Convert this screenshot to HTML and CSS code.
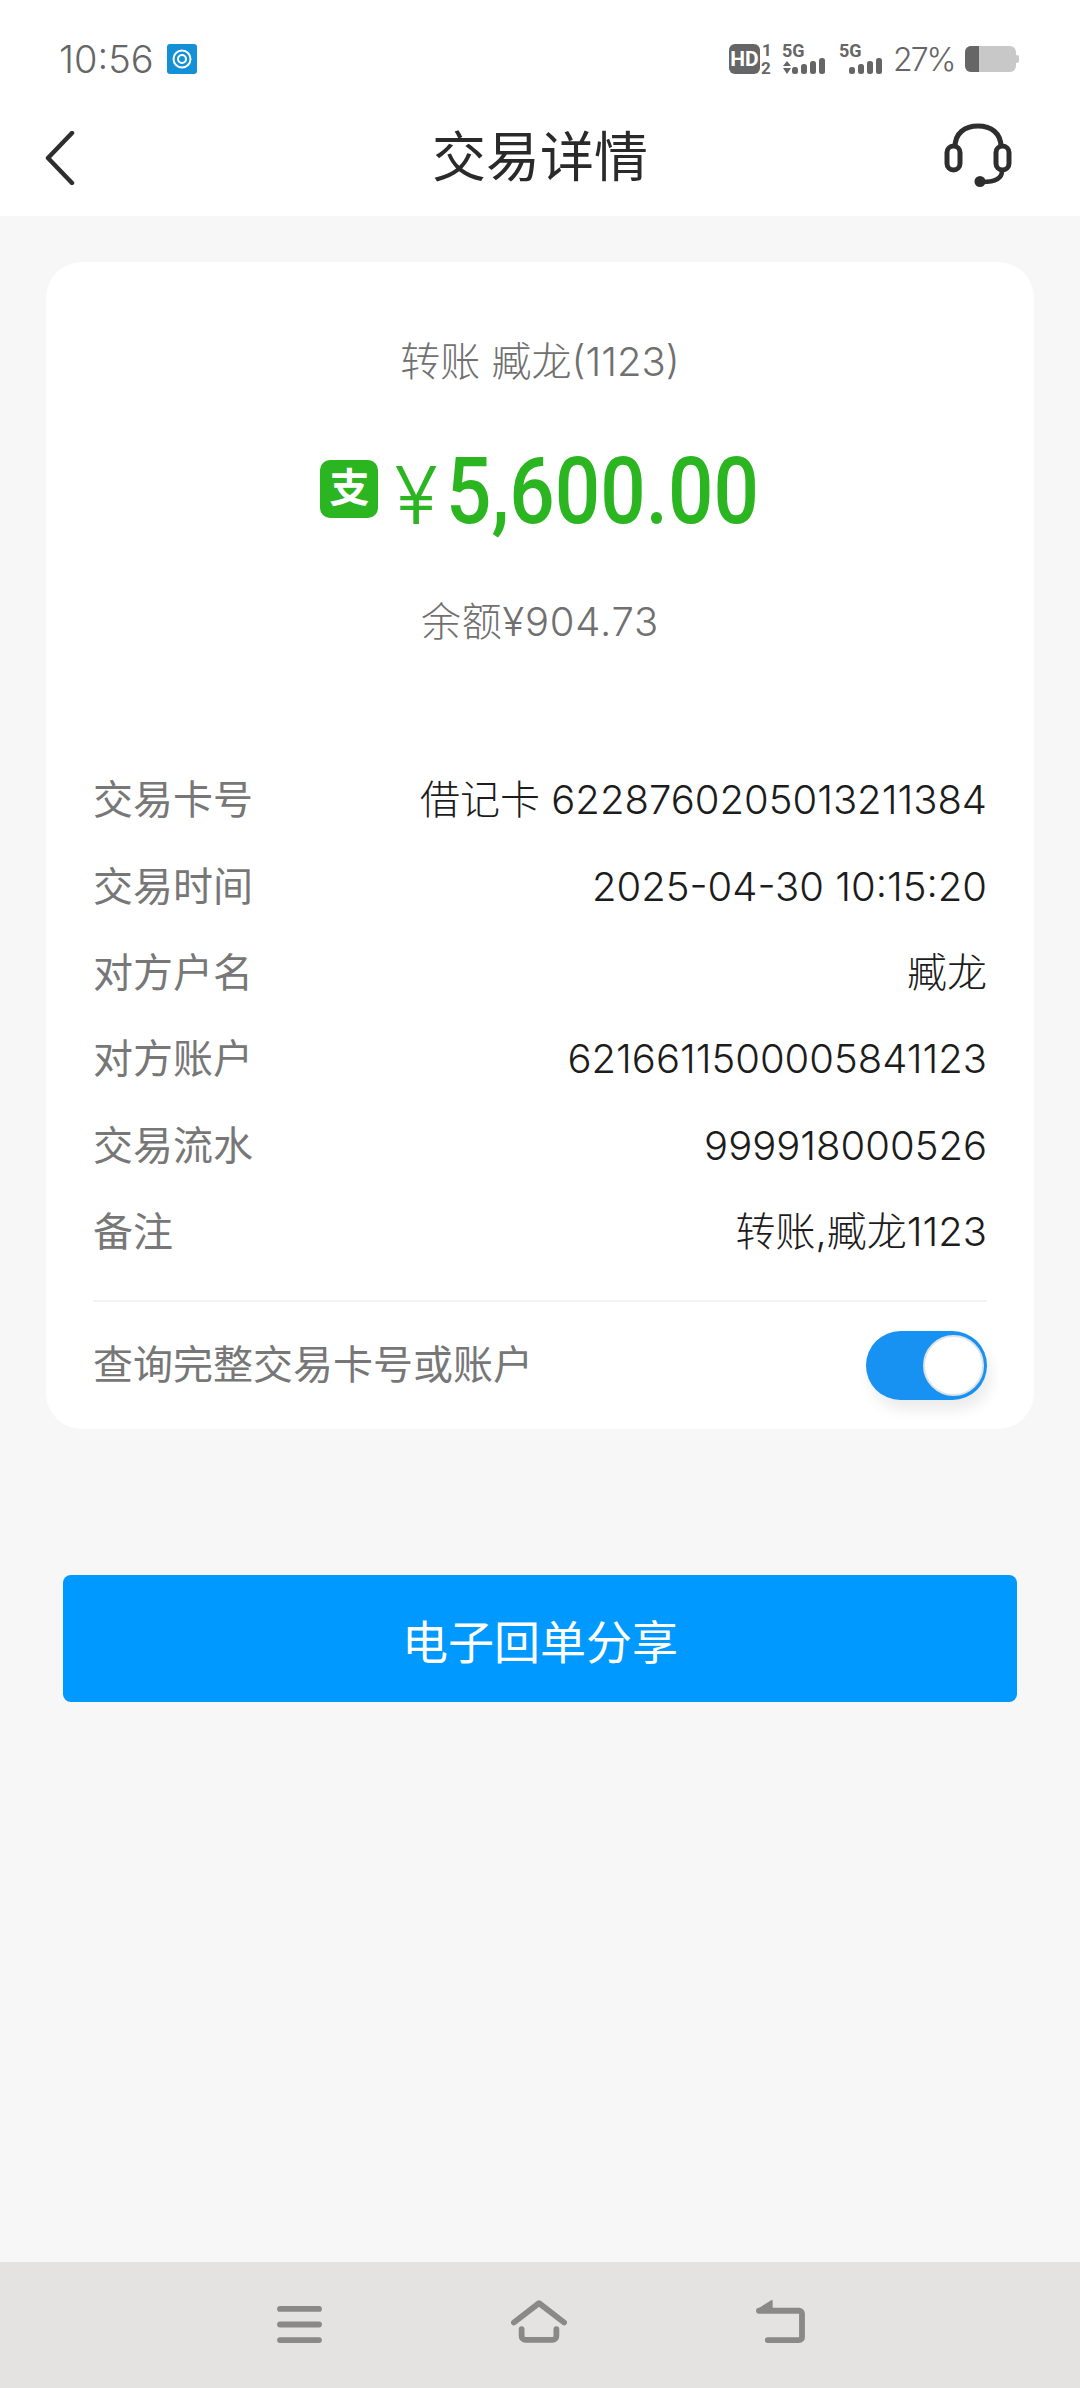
FILE: index.html
```html
<!DOCTYPE html>
<html lang="zh-CN">
    <head>
        <meta charset="utf-8">
        <title>交易详情</title>
        <meta name="viewport" content="width=device-width,initial-scale=1">
        <link rel="stylesheet" href="styles.css">
    </head>
    <body>
        <div class="status-bar">
            <div class="status-left">
                <span class="clock">10:56</span>
                <svg class="app-chip" viewBox="0 0 30 30">
                    <rect width="30" height="30" rx="3" fill="#1491d6"/>
                    <circle cx="15" cy="15" r="8.5" fill="none" stroke="#fff" stroke-width="2"/>
                    <circle cx="15" cy="15" r="4" fill="none" stroke="#fff" stroke-width="2"/>
                </svg>
            </div>
            <div class="status-right">
                <svg class="sim-icons" viewBox="0 -4 155 40">
                    <rect x="0" y="1" width="31" height="30" rx="6" fill="#666"/>
                    <text x="15.5" y="23" class="hd">HD</text>
                    <text x="33" y="13" class="sim-num">1</text>
                    <text x="32" y="31" class="sim-num">2</text>
                    <text x="53" y="14" class="net">5G</text>
                    <path d="M54 23l4-5 4 5zM54 25h8l-4 6z" fill="#666"/>
                    <rect x="63" y="24" width="6" height="7" rx="2.5" fill="#666"/>
                    <rect x="72" y="21" width="6" height="10" rx="2.5" fill="#666"/>
                    <rect x="81" y="18" width="6" height="13" rx="2.5" fill="#666"/>
                    <rect x="90" y="15" width="6" height="16" rx="2.5" fill="#666"/>
                    <text x="110" y="14" class="net">5G</text>
                    <rect x="120" y="24" width="6" height="7" rx="2.5" fill="#666"/>
                    <rect x="129" y="21" width="6" height="10" rx="2.5" fill="#666"/>
                    <rect x="138" y="18" width="6" height="13" rx="2.5" fill="#666"/>
                    <rect x="147" y="15" width="6" height="16" rx="2.5" fill="#666"/>
                </svg>
                <span class="battery-text">27%</span>
                <svg class="battery" viewBox="0 0 54 26">
                    <rect x="0" y="0" width="51" height="26" rx="6" fill="#c8c8c8"/>
                    <rect x="50" y="9" width="4" height="8" rx="2" fill="#c8c8c8"/>
                    <path d="M6 0h8v26H6a6 6 0 0 1-6-6V6a6 6 0 0 1 6-6z" fill="#666"/>
                </svg>
            </div>
        </div>

        <header class="nav-header">
            <button class="icon-btn">
                <svg class="back-icon" viewBox="0 0 30 54">
                    <path d="M27 2L3 27l24 25" fill="none" stroke="#2e2e2e" stroke-width="4.5" stroke-linecap="round" stroke-linejoin="round"/>
                </svg>
            </button>
            <h1 class="page-title">交易详情</h1>
            <button class="icon-btn service-btn">
                <svg class="service-icon" viewBox="0 0 68 64">
                    <path d="M11 24C11 10 21 3 34 3s23 7 23 21" fill="none" stroke="#2e2e2e" stroke-width="5"/>
                    <rect x="3" y="23" width="13" height="24" rx="6.5" fill="none" stroke="#2e2e2e" stroke-width="5"/>
                    <rect x="52" y="23" width="13" height="24" rx="6.5" fill="none" stroke="#2e2e2e" stroke-width="5"/>
                    <path d="M58 48c0 8-8 11-20 11" fill="none" stroke="#2e2e2e" stroke-width="4.5"/>
                    <circle cx="36" cy="58.5" r="5.5" fill="#2e2e2e"/>
                </svg>
            </button>
        </header>

        <main class="content">
            <section class="detail-card">
                <p class="trade-title">转账 臧龙(1123)</p>
                <div class="amount-line">
                    <span class="pay-badge">支</span>
                    <span class="yen">¥</span>
                    <span class="amount">5,600.00</span>
                </div>
                <p class="balance">余额¥904.73</p>

                <dl class="rows">
                    <div class="row"><dt>交易卡号</dt><dd>借记卡 6228760205013211384</dd></div>
                    <div class="row"><dt>交易时间</dt><dd>2025-04-30 10:15:20</dd></div>
                    <div class="row"><dt>对方户名</dt><dd>臧龙</dd></div>
                    <div class="row"><dt>对方账户</dt><dd>6216611500005841123</dd></div>
                    <div class="row"><dt>交易流水</dt><dd>999918000526</dd></div>
                    <div class="row"><dt>备注</dt><dd>转账,臧龙1123</dd></div>
                </dl>

                <div class="full-number">
                    <span class="full-label">查询完整交易卡号或账户</span>
                    <div class="toggle"><div class="knob"></div></div>
                </div>
            </section>

            <button class="share-btn">电子回单分享</button>
        </main>

        <nav class="sys-nav">
            <svg class="menu-icon" viewBox="0 0 46 38">
                <path d="M3 3h40M3 19h40M3 35h40" fill="none" stroke="#8b8987" stroke-width="6" stroke-linecap="round"/>
            </svg>
            <svg class="home-icon" viewBox="0 0 58 44">
                <path d="M3 23L29 3l26 20M11 30v7a4 4 0 0 0 4 4h28a4 4 0 0 0 4-4v-7" fill="none" stroke="#8b8987" stroke-width="6" stroke-linecap="round" stroke-linejoin="round"/>
            </svg>
            <svg class="return-icon" viewBox="0 0 50 44">
                <path d="M3 11h41a3 3 0 0 1 3 3v24a3 3 0 0 1-3 3H12" fill="none" stroke="#8b8987" stroke-width="6" stroke-linecap="round" stroke-linejoin="round"/>
                <path d="M2 10L16 1v10z" fill="#8b8987" stroke="#8b8987" stroke-width="2" stroke-linejoin="round"/>
            </svg>
        </nav>
    </body>
</html>
```

FILE: styles.css
```css
* {
    box-sizing: border-box;
}

body {
    display: flex;
    flex-direction: column;
    width: 1080px;
    height: 2388px;
    margin: 0;
    background-color: #f7f7f7;
    font-family: Inter, "Noto Sans CJK SC", sans-serif;
    color: #1c1c1c;
}

p, h1, dl, dd {
    margin: 0;
}

button {
    padding: 0;
    border: 0;
    background: none;
    font-family: inherit;
}

svg {
    display: block;
}

/* status bar */
.status-bar {
    display: flex;
    justify-content: space-between;
    align-items: center;
    height: 100px;
    padding: 18px 61px 0 59px;
    background-color: #fff;
    color: #666;
}
.status-left {
    display: flex;
    align-items: center;
    gap: 13px;
}
.clock {
    font-size: 38px;
    font-weight: 300;
}
.app-chip {
    width: 30px;
    height: 30px;
}
.status-right {
    display: flex;
    align-items: center;
}
.sim-icons {
    width: 155px;
    height: 40px;
    margin-right: 9px;
}
.sim-icons text {
    font-family: Roboto, sans-serif;
    font-weight: 700;
    fill: #666;
}
.sim-icons .hd {
    font-size: 21px;
    fill: #fff;
    text-anchor: middle;
}
.sim-icons .sim-num {
    font-size: 17px;
}
.sim-icons .net {
    font-size: 18px;
}
.battery-text {
    width: 72px;
    font-size: 32px;
    font-weight: 300;
    letter-spacing: -2px;
}
.battery {
    width: 54px;
    height: 26px;
}

/* header */
.nav-header {
    display: grid;
    grid-template-columns: 1fr auto 1fr;
    align-items: center;
    height: 116px;
    padding: 0 45px;
    background-color: #fff;
}
.icon-btn {
    display: flex;
}
.service-btn {
    justify-content: flex-end;
    margin-bottom: 6px;
    padding-right: 23px;
}
.back-icon {
    width: 30px;
    height: 54px;
}
.service-icon {
    width: 68px;
    height: 64px;
}
.page-title {
    font-size: 54px;
    font-weight: 400;
    line-height: 60px;
    color: #2a2a2a;
}

/* card */
.content {
    flex: 1;
    padding: 46px 46px 0;
}
.detail-card {
    height: 1167px;
    padding: 70px 47px 0;
    background-color: #fff;
    border-radius: 36px;
}
.trade-title {
    height: 60px;
    font-size: 40px;
    font-weight: 300;
    line-height: 60px;
    text-align: center;
    color: #707070;
}
.amount-line {
    display: flex;
    justify-content: center;
    align-items: center;
    height: 100px;
    margin-top: 50px;
    color: #2bb521;
}
.pay-badge {
    width: 58px;
    height: 58px;
    margin: 0 16px 6px 0;
    background-color: #2bb521;
    border-radius: 10px;
    font-size: 40px;
    font-weight: 700;
    line-height: 56px;
    text-align: center;
    color: #fff;
}
.yen {
    margin: 6px 8px 0 0;
    font-size: 80px;
    font-weight: 300;
    line-height: 60px;
}
.amount {
    width: 314px;
    font-family: Roboto, sans-serif;
    font-size: 93px;
    font-weight: 500;
    line-height: 100px;
    white-space: nowrap;
    transform: scaleX(0.86);
    transform-origin: left center;
}
.balance {
    height: 60px;
    margin-top: 50px;
    font-size: 40px;
    font-weight: 300;
    letter-spacing: 0.8px;
    line-height: 60px;
    text-align: center;
    color: #707070;
}
.rows {
    margin-top: 105px;
}
.row {
    display: flex;
    justify-content: space-between;
    align-items: center;
    height: 86.4px;
    font-size: 40px;
    line-height: 60px;
}
.row dt {
    color: #777;
}
.row dd {
    font-weight: 300;
    color: #1c1c1c;
}

/* toggle row */
.full-number {
    display: flex;
    justify-content: space-between;
    align-items: center;
    height: 128px;
    margin-top: 25px;
    border-top: 2px solid #f3f3f3;
    font-size: 40px;
    color: #777;
}
.full-label {
    margin-bottom: 6px;
}
.toggle {
    display: flex;
    justify-content: flex-end;
    align-items: center;
    width: 121px;
    height: 69px;
    padding-right: 3px;
    background-color: #1792f2;
    border-radius: 35px;
    box-shadow: 4px 10px 14px rgba(0, 0, 0, 0.08);
}
.knob {
    width: 61px;
    height: 61px;
    background-color: #fff;
    border: 2px solid #dfe3e6;
    border-radius: 50%;
}

.share-btn {
    display: block;
    width: 954px;
    height: 127px;
    margin: 146px 0 0 17px;
    background-color: #0099ff;
    border-radius: 8px;
    font-size: 46px;
    color: #fff;
}

/* system navigation */
.sys-nav {
    flex: none;
    display: grid;
    grid-template-columns: 45px 56px 49px;
    column-gap: 189px;
    align-items: start;
    height: 126px;
    padding: 38px 0 0 277px;
    background-color: #e5e3e2;
}
.menu-icon {
    width: 45px;
    height: 37px;
    margin-top: 6px;
}
.home-icon {
    width: 56px;
    height: 43px;
}
.return-icon {
    width: 49px;
    height: 43px;
}
```
